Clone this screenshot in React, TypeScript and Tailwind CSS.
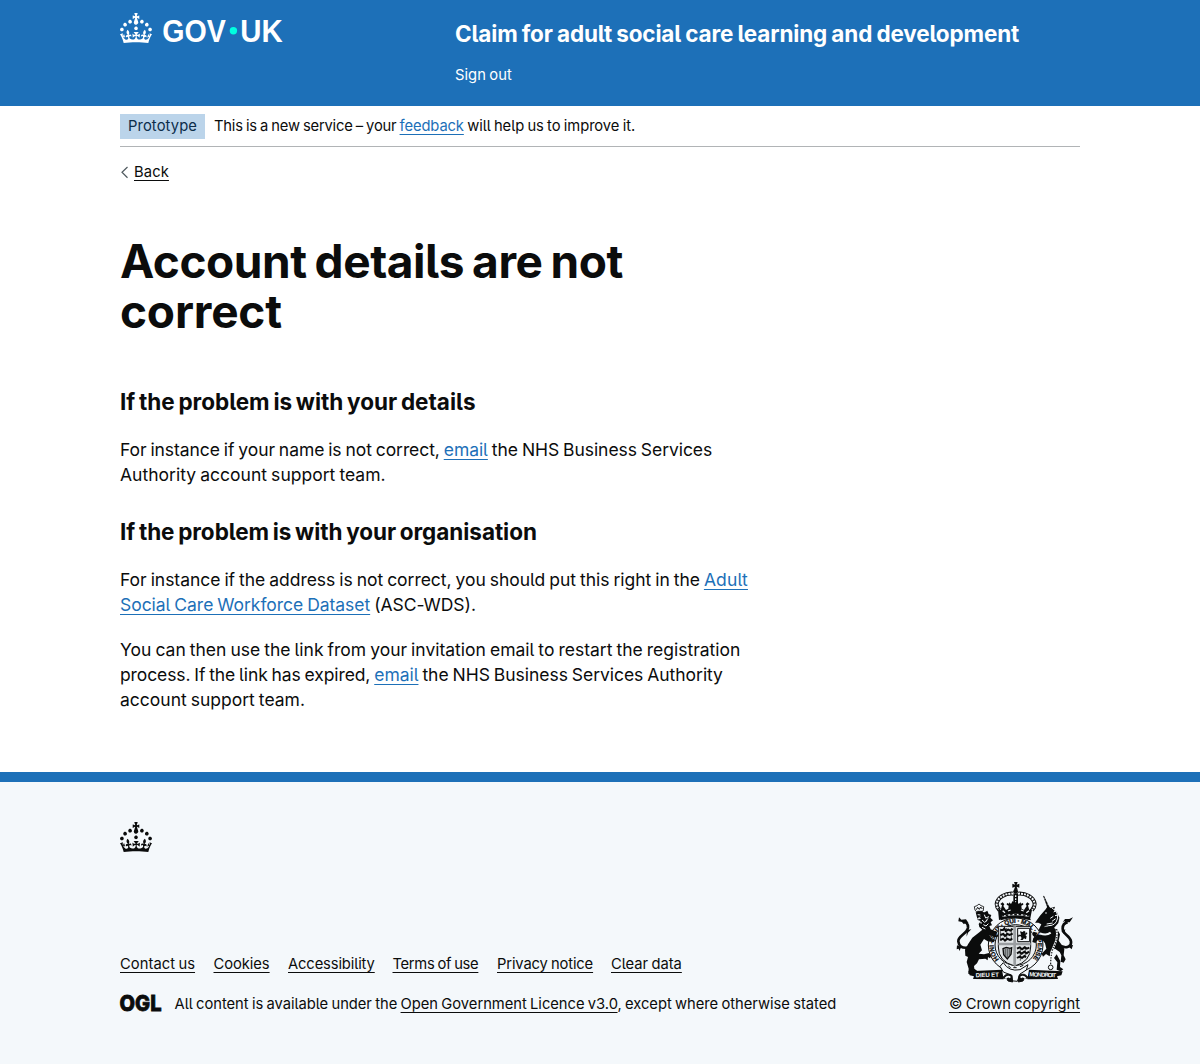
import type { ReactNode } from "react";

const CROWN =
  "M22.6 10.4c-1 .4-2-.1-2.4-1-.4-.9.1-2 1-2.4.9-.4 2 .1 2.4 1s-.1 2-1 2.4m-5.9 6.7c-.9.4-2-.1-2.4-1-.4-.9.1-2 1-2.4.9-.4 2 .1 2.4 1s-.1 2-1 2.4m10.8-3.7c-1 .4-2-.1-2.4-1-.4-.9.1-2 1-2.4.9-.4 2 .1 2.4 1s0 2-1 2.4m3.3 4.8c-1 .4-2-.1-2.4-1-.4-.9.1-2 1-2.4.9-.4 2 .1 2.4 1s-.1 2-1 2.4M17 4.7l2.3 1.2V2.5l-2.3.7-.2-.2.9-3h-3.4l.9 3-.2.2c-.1.1-2.3-.7-2.3-.7v3.4L15 4.7c.1.1.1.2.2.2l-1.3 4c-.1.2-.1.4-.1.6 0 1.1.8 2 1.9 2.2h.7c1-.2 1.9-1.1 1.9-2.1 0-.2 0-.4-.1-.6l-1.3-4c-.1-.2 0-.2.1-.3m-7.6 5.7c.9.4 2-.1 2.4-1 .4-.9-.1-2-1-2.4-.9-.4-2 .1-2.4 1s0 2 1 2.4m-5 3c.9.4 2-.1 2.4-1 .4-.9-.1-2-1-2.4-.9-.4-2 .1-2.4 1s.1 2 1 2.4m-3.2 4.8c.9.4 2-.1 2.4-1 .4-.9-.1-2-1-2.4-.9-.4-2 .1-2.4 1s0 2 1 2.4m14.8 11c4.4 0 8.6.3 12.3.8 1.1-4.5 2.4-7 3.7-8.8l-2.5-.9c.2 1.3.3 1.9 0 2.7-.4-.4-.8-1.1-1.1-2.3l-1.2 4c.7-.5 1.3-.8 2-.9-1.1 2.5-2.6 3.1-3.5 3-1.1-.2-1.7-1.2-1.5-2.1.3-1.2 1.5-1.5 2.1-.1 1.1-2.3-.8-3-2-2.3 1.9-1.9 2.1-3.5.6-5.6-2.1 1.6-2.1 3.2-1.2 5.5-1.2-1.4-3.2-.6-2.5 1.6.9-1.4 2.1-.5 1.9.8-.2 1.1-1.7 2.1-3.5 1.9-2.7-.2-2.9-2.1-2.9-3.6.7-.1 1.9.5 2.9 1.9l.4-4.3c-1.1 1.1-2.1 1.4-3.2 1.4.4-1.2 2.1-3 2.1-3h-5.4s1.7 1.9 2.1 3c-1.1 0-2.1-.2-3.2-1.4l.4 4.3c1-1.4 2.2-2 2.9-1.9-.1 1.5-.2 3.4-2.9 3.6-1.9.2-3.4-.8-3.5-1.9-.2-1.3 1-2.2 1.9-.8.7-2.3-1.2-3-2.5-1.6.9-2.2.9-3.9-1.2-5.5-1.5 2-1.3 3.7.6 5.6-1.2-.7-3.1 0-2 2.3.6-1.4 1.8-1.1 2.1.1.2.9-.3 1.9-1.5 2.1-.9.2-2.4-.5-3.5-3 .6 0 1.2.3 2 .9l-1.2-4c-.3 1.1-.7 1.9-1.1 2.3-.3-.8-.2-1.4 0-2.7l-2.9.9C1.3 23 2.6 25.5 3.7 30c3.7-.5 7.9-.8 12.3-.8";

function GovUkLogo() {
  return (
    <svg viewBox="0 0 163 30" className="block h-[30px] w-[163px] overflow-visible" fill="#fff" role="img" aria-label="GOV.UK">
      <path d={CROWN} fillRule="evenodd" />
      <g fontFamily="Liberation Sans, Arial, sans-serif" fontWeight="700" fontSize="31">
        <text x="42.3" y="29" textLength="63.5" lengthAdjust="spacingAndGlyphs">GOV</text>
        <text x="120.2" y="29" textLength="42.4" lengthAdjust="spacingAndGlyphs">UK</text>
      </g>
      <circle cx="113.4" cy="17.8" r="3.7" fill="#00ffe0" />
    </svg>
  );
}

function RoyalArms() {
  const ink = "#0b0c0c";
  return (
    <svg viewBox="48 33 351 306" className="block h-[102px] w-[117px]" fill={ink} stroke="none" aria-hidden="true">
      {/* crown */}
      <path d="M222 36h11l-3 8 8-3v12l-8-3 3 9h-11l3-9-8 3V41l8 3z" />
      <circle cx="227" cy="64" r="7" />
      <path d="M220 70h14v40h-14z" />
      <path d="M227 76v28" stroke="#f4f8fb" strokeWidth="4" strokeDasharray="5 4" />
      <path d="M220 71c-22-2-48 10-50 31 0 7 3 13 8 18M234 71c22-2 48 10 50 31 0 7-3 13-8 18" fill="none" stroke={ink} strokeWidth="12" />
      <path d="M220 71c-22-2-48 10-50 31 0 7 3 13 8 18M234 71c22-2 48 10 50 31 0 7-3 13-8 18" fill="none" stroke="#f4f8fb" strokeWidth="6" strokeDasharray="6 3" />
      <path d="M174 119l5-3 3 5 4-15-5-4 7-5 5 6-3 5 8 12 7-4 1-9-6-3 1-5 6 2 1-4 5 5 5-9 5 4 4 0 4-4 5 9 6-5 1 4 6-2 1 5-6 3 1 9 7 4 8-12-3-5 5-6 7 5-5 4 4 15 3-5 5 3-6 31q-47-14-93 0z" />
      <path d="M188 122l7 6M204 123l8-3M243 120l8 3M259 128l8-6M186 139q41-11 82 0" stroke="#f4f8fb" strokeWidth="4" fill="none" />
      <path d="M184 139q43-11 86 0" stroke={ink} strokeWidth="4" strokeDasharray="8 5" fill="none" />
      <path d="M182 149q45-13 90 0" stroke={ink} strokeWidth="3" fill="none" />

      {/* garter */}
      <ellipse cx="227" cy="225" rx="82" ry="81" fill="#f4f8fb" stroke={ink} strokeWidth="3" />
      <ellipse cx="227" cy="225" rx="62" ry="61" fill="#eceff1" stroke={ink} strokeWidth="3" />
      <path id="garter" d="M177 268A66 66 0 1 1 277 268" fill="none" />
      <text fontFamily="Liberation Sans, Arial, sans-serif" fontSize="19" fontWeight="700" stroke={ink} strokeWidth="0.8">
        <textPath href="#garter" textLength="298">HONI · SOIT · QUI · MAL · Y PENSE</textPath>
      </text>

      {/* shield */}
      <path d="M175 169h97v62q0 44-48 57-49-13-49-57z" fill="#e2e6e8" stroke={ink} strokeWidth="3" />
      <path d="M224 169v118M175 222h97" stroke="#9a9ea1" strokeWidth="8" />
      <g fill="none" stroke={ink} strokeWidth="6">
        <path d="M181 180h8l4-5 4 8 8-4 6 3 7-6M181 195l9-3 5 6 7-6 7 3 9-4M181 210l8-4 6 6 6-6 9 4 7-4" />
        <path d="M231 236l8-4 7 6 8-6 6 4 8-3M231 250l7-4 7 5 8-6 7 5 7-5M231 264l9-5 6 5 7-6 5 4" />
        <path d="M181 176v36M200 174v38M214 174v38M241 230v42M256 230v32" strokeWidth="2" />
      </g>
      <path d="M233 175h36v40h-36z" fill="#f4f8fb" stroke={ink} strokeWidth="3" />
      <path d="M240 184l8 2 4-4 5 4-3 5 7-4 1 5-6 3 4 4-2 9-6-3-4 5-7 0 4-6-4-6-7 3 1-7 8 0z" />
      <path d="M189 236l10-4 11 3 5-2-2 20-11 14-11-13z" fill="#a4a8aa" stroke={ink} strokeWidth="4" />
      <path d="M196 237v20M202 236v26M208 237v18" stroke={ink} strokeWidth="1.5" />

      {/* lion */}
      <path d="M105 120l-2-10 8-3 6-5 6 5 8 3-1 12-7 4-14-1z" fill="#f4f8fb" stroke={ink} strokeWidth="2.5" />
      <path d="M109 119l4-7 5 6 4-7 5 6M112 124h16" fill="none" stroke={ink} strokeWidth="3" />
      <path d="M107 127l12-2 15 2 8-5 4 10 8 3-3 8 8 8-7 6 4 9-8 2 4 10 20 8-4 7 6 8-10 1-16-7 6 12 12 2-5 8-18-3-11-7-11 17 5 17-10 10 16 2 15-4 7 8-4 8-6-4-1 10-7-5-19 2-6 12-9 8 1 8 8 6 2 12-9-4-5 5-6-4-8 1 1-16-6-20 4-15-8-4-1-18 10-18 12-18 21-16 9-8-9-8-2-9 6-9-9-3z" />
      <path d="M113 134l8 1M120 140l-7 7 9-2M133 134l4 10 10-4M126 150l8 7 8-6M130 164l8 4 7-7M119 158l7 1M144 145l-6 8M126 172l10 5" fill="none" stroke="#f4f8fb" strokeWidth="3" />
      <path d="M83 233q-26 3-28-19c-1-17 27-23 29-41 1-12-6-19-16-17" fill="none" stroke={ink} strokeWidth="8" />
      <path d="M57 142l7 7 14-1 8 12-9-4-5 7-6-7-11-2zM51 226l13 5-6 12-2-7-6 2zM80 180l14-2-10 10-4 12z" />

      {/* unicorn */}
      <path d="M309 77l4 2 15 32-6 2z" />
      <path d="M325 83l-13 2M325 92l-9 1M328 101l-8 2" stroke="#f4f8fb" strokeWidth="1.5" />
      <path d="M300 137l17-19 7-11 8 7 13-4-3 9 9 8 6 14-2 18-13 15 11 7 7 12-4 19 9 12 8 13-2 19 6 12-6 10-9-3 2-19-5-10-14-10-13 6-3 17-11-7-9 8-4-9 14-15-4-16-7-9-13-4-9 12-9-3 3-12 12-10 13 2-9-17 8-16-9-5-10 0z" />
      <path d="M336 114q21 13 16 33t-25 20M331 145l9-6M336 154l11-8M320 162l18-3M313 170l19-4M341 126l9-5M345 137l10-2" fill="none" stroke="#f4f8fb" strokeWidth="3" />
      <circle cx="318" cy="129" r="2.5" fill="#f4f8fb" />
      <path d="M357 142q-1 19-20 27-16 6-27 1" fill="none" stroke={ink} strokeWidth="2.5" />
      <path d="M300 190q19 8 32-2M350 177q4 28-8 51-10 20-10 57" stroke="#f4f8fb" strokeWidth="6" fill="none" />
      <path d="M350 177q4 28-8 51-10 20-10 57" stroke={ink} strokeWidth="3.5" strokeDasharray="4 4" fill="none" />
      <circle cx="332" cy="292" r="7" fill="none" stroke={ink} strokeWidth="3" />
      <path d="M364 229c19 7 31-1 29-15-2-17-25-21-25-38 0-11 5-18 15-19" fill="none" stroke={ink} strokeWidth="8" />
      <path d="M399 142l-10 15-8 0-5 7-2-11-6 4 7-10 13 0zM391 226l8-1-4 13-7-6-10 4zM364 183l12-5-4 14zM350 253l11 20-1 18 10 7-8 6-12-5 2-22-10-13zM292 188l-12-3-3 10 9 7z" />

      {/* motto ribbons and compartment */}
      <path d="M85 304l101-5 5 29-92-1 3-8-13-3z" />
      <path d="M368 304l-101-5-5 29 92-1-3-8 13-3z" />
      <path d="M190 278q17 28 50 21l24-15-5 16-19 12-8 22-20-2 1-17-23-9-10-17z" fill="#f4f8fb" stroke={ink} strokeWidth="3" />
      <path d="M188 324q10-18 28-8l2 20-14-3-4-8zM265 324q-10-18-28-8l-2 20 14-3 4-8zM205 288l7 5M220 293h10M240 290l10-4" stroke={ink} strokeWidth="3" />
      <path d="M196 325q9-9 15-2M257 325q-9-9-15-2M224 320h6" fill="none" stroke="#f4f8fb" strokeWidth="5" />
      <g fill="#f4f8fb" fontFamily="Liberation Sans, Arial, sans-serif" fontWeight="700" fontSize="18">
        <text x="107" y="322" textLength="70" transform="rotate(-2 107 322)">DIEU ET</text>
        <text x="268" y="319" textLength="80" transform="rotate(2 268 319)">MON DROIT</text>
      </g>
    </svg>
  );
}

function Link({ children, className = "text-[#1d70b8]" }: { children: ReactNode; className?: string }) {
  return (
    <a href="#" className={`underline decoration-1 underline-offset-[3px] ${className}`}>
      {children}
    </a>
  );
}

const footerLinks = [
  { label: "Contact us", cls: "w-[93.5px] tracking-[0.04px]" },
  { label: "Cookies", cls: "w-[74.5px] tracking-[-0.06px]" },
  { label: "Accessibility", cls: "w-[104.5px] tracking-[-0.13px]" },
  { label: "Terms of use", cls: "w-[104.5px] tracking-[-0.31px]" },
  { label: "Privacy notice", cls: "w-[114px] tracking-[-0.14px]" },
  { label: "Clear data", cls: "tracking-[-0.02px]" },
];

export default function App() {
  return (
    <div className="min-h-[1064px] bg-white font-['Inter',sans-serif] text-[14.75px] leading-5 text-[#0b0c0c] [font-feature-settings:'cv05'] [word-spacing:-0.8px]">
      <header className="h-[106px] bg-[#1d70b8] text-white">
        <div className="mx-auto flex w-[960px]">
          <div className="w-[335px] pt-[13px]">
            <GovUkLogo />
          </div>
          <div className="pt-[19px]">
            <p className="text-[22.5px] leading-[30px] font-bold tracking-[-0.14px] whitespace-nowrap [word-spacing:-1px]">
              Claim for adult social care learning and development
            </p>
            <p className="mt-4 tracking-[0.04px]">Sign out</p>
          </div>
        </div>
      </header>

      <div className="mx-auto w-[960px]">
        <div className="flex h-[41px] items-start border-b border-[#b1b4b6] pt-2">
          <strong className="mr-[9px] h-[25px] w-[85px] bg-[#bbd4ea] pt-[2px] pl-2 font-normal tracking-[0.1px] text-[#0c2d4a]">Prototype</strong>
          <p className="pt-[2px] tracking-[-0.06px] whitespace-nowrap">
            <span className="tracking-[-0.2px]">This is a new service – your </span>
            <Link className="tracking-[-0.12px] text-[#1d70b8]">feedback</Link> will help us to improve it.
          </p>
        </div>

        <div className="flex items-center pt-[15px]">
          <svg viewBox="0 0 14 14" className="h-3.5 w-3.5" fill="none" stroke="#505a5f" strokeWidth="1.2">
            <path d="M7.5 2 2 7.3l5.5 5.4" />
          </svg>
          <Link className="tracking-[0.12px] text-[#0b0c0c]">Back</Link>
        </div>

        <main className="w-[640px] pt-[54px]">
          <h1 className="text-[46px] leading-[50px] font-bold whitespace-nowrap [word-spacing:-2.5px]">
            <span className="block tracking-[-0.44px]">Account details are not</span>
            <span className="block tracking-[-0.2px]">correct</span>
          </h1>

          <h2 className="mt-[51px] text-[22.5px] leading-[30px] font-bold [word-spacing:-1.6px]">
            If the problem is with your details
          </h2>
          <p className="mt-5 text-[17.5px] leading-[25px] whitespace-nowrap [word-spacing:-0.9px]">
            <span className="block tracking-[-0.06px]">
              <span className="tracking-[-0.075px]">For instance if your name is not correct, </span>
              <Link>email</Link> the NHS Business Services
            </span>
            <span className="block tracking-[0.02px]">Authority account support team.</span>
          </p>

          <h2 className="mt-[30px] text-[22.5px] leading-[30px] font-bold tracking-[-0.04px] [word-spacing:-1.6px]">
            If the problem is with your organisation
          </h2>
          <p className="mt-5 text-[17.5px] leading-[25px] whitespace-nowrap [word-spacing:-0.9px]">
            <span className="block">
              <span className="tracking-[-0.028px]">For instance if the address is not correct, you should put this right in the </span>
              <Link className="tracking-[0.16px] text-[#1d70b8]">Adult</Link>
            </span>
            <span className="block tracking-[-0.04px]">
              <Link>Social Care Workforce Dataset</Link> (ASC-WDS).
            </span>
          </p>
          <p className="mt-5 text-[17.5px] leading-[25px] whitespace-nowrap [word-spacing:-0.9px]">
            <span className="block">
              You can then use the link from your invitation email to restart the registration
            </span>
            <span className="block tracking-[-0.04px]">
              <span className="tracking-[-0.105px]">process. If the link has expired, </span>
              <Link>email</Link> the NHS Business Services Authority
            </span>
            <span className="block">account support team.</span>
          </p>
        </main>
      </div>

      <footer className="mt-[60px] h-[292px] border-t-[10px] border-[#1d70b8] bg-[#f4f8fb]">
        <div className="mx-auto w-[960px] pt-10">
          <svg viewBox="0 0 32 30" className="block h-[30px] w-8" fill="#0b0c0c" aria-hidden="true">
            <path d={CROWN} fillRule="evenodd" />
          </svg>
          <div className="mt-[29px] flex items-end justify-between">
            <div>
              <ul className="flex whitespace-nowrap">
                {footerLinks.map((l) => (
                  <li key={l.label} className={l.cls}>
                    <Link className="text-[#0b0c0c]">{l.label}</Link>
                  </li>
                ))}
              </ul>
              <div className="mt-5 flex h-5 items-center whitespace-nowrap">
                <svg viewBox="0 0 41 17" className="mr-[13.5px] -mt-[2px] h-[17px] w-[41px] overflow-visible" fill="#0b0c0c" role="img" aria-label="OGL">
                  <text x="-0.5" y="16.4" textLength="42" lengthAdjust="spacingAndGlyphs" fontFamily="Inter, sans-serif" fontWeight="800" fontSize="22" stroke="#0b0c0c" strokeWidth="0.8">
                    OGL
                  </text>
                </svg>
                <span className="tracking-[-0.035px]">
                  All content is available under the <Link className="text-[#0b0c0c]">Open Government Licence v3.0</Link>, except where otherwise stated
                </span>
              </div>
            </div>
            <div className="flex flex-col items-end">
              <div className="mr-[7px]">
                <RoyalArms />
              </div>
              <div className="mt-[11px] tracking-[-0.05px] whitespace-nowrap">
                <Link className="text-[#0b0c0c]">© Crown copyright</Link>
              </div>
            </div>
          </div>
        </div>
      </footer>
    </div>
  );
}
